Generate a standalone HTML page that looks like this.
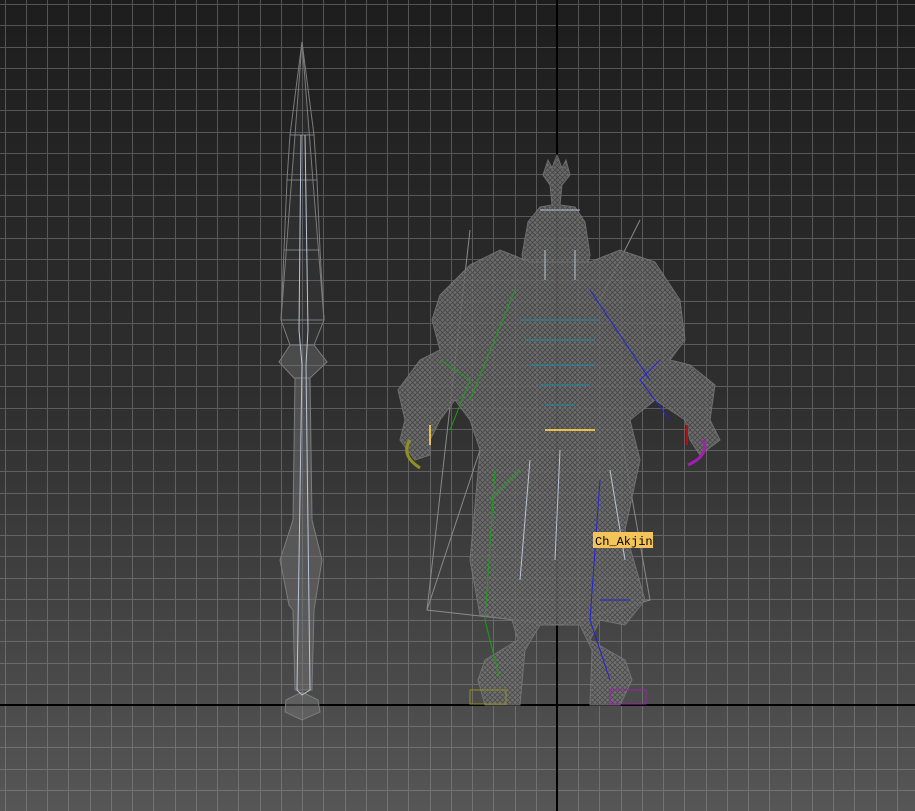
<!DOCTYPE html>
<html><head><style>
html,body{margin:0;padding:0;width:915px;height:811px;overflow:hidden;background:#333}
svg{display:block}
</style></head><body>
<svg width="915" height="811" viewBox="0 0 915 811" xmlns="http://www.w3.org/2000/svg">
<defs>
<linearGradient id="bg" x1="0" y1="0" x2="0" y2="1">
<stop offset="0" stop-color="#1d1d1d"/>
<stop offset="0.5" stop-color="#2f2f2f"/>
<stop offset="1" stop-color="#565656"/>
</linearGradient>
<pattern id="mesh" patternUnits="userSpaceOnUse" width="5" height="5">
<rect width="5" height="5" fill="#767676"/>
<path d="M0 0L5 5M5 0L0 5" stroke="#4a4a4a" stroke-width="0.8"/>
</pattern>
</defs>
<rect width="915" height="811" fill="url(#bg)"/>
<path shape-rendering="crispEdges" fill="none" stroke="rgba(150,150,150,0.45)" stroke-width="1" d="
M5.5 0V811M26.5 0V811M47.5 0V811M68.5 0V811M90.5 0V811M111.5 0V811M132.5 0V811M153.5 0V811M175.5 0V811M196.5 0V811M217.5 0V811M238.5 0V811M260.5 0V811M281.5 0V811M302.5 0V811M323.5 0V811M345.5 0V811M366.5 0V811M387.5 0V811M408.5 0V811M430.5 0V811M451.5 0V811M472.5 0V811M493.5 0V811M515.5 0V811M536.5 0V811M578.5 0V811M599.5 0V811M621.5 0V811M642.5 0V811M663.5 0V811M684.5 0V811M706.5 0V811M727.5 0V811M748.5 0V811M769.5 0V811M791.5 0V811M812.5 0V811M833.5 0V811M854.5 0V811M876.5 0V811M897.5 0V811
M0 4.5H915M0 25.5H915M0 47.5H915M0 68.5H915M0 89.5H915M0 110.5H915M0 132.5H915M0 153.5H915M0 174.5H915M0 195.5H915M0 216.5H915M0 238.5H915M0 259.5H915M0 280.5H915M0 301.5H915M0 323.5H915M0 344.5H915M0 365.5H915M0 386.5H915M0 408.5H915M0 429.5H915M0 450.5H915M0 471.5H915M0 493.5H915M0 514.5H915M0 535.5H915M0 556.5H915M0 578.5H915M0 599.5H915M0 620.5H915M0 641.5H915M0 663.5H915M0 684.5H915M0 726.5H915M0 747.5H915M0 769.5H915M0 790.5H915"/>
<rect x="556" y="0" width="2" height="811" fill="#000"/>
<rect x="0" y="704" width="915" height="2" fill="#000"/>

<!-- spear -->
<g fill="none" stroke="#7c7c7c" stroke-width="1">
<path d="M302 42 L281 320 L290 345 L314 345 L324 320 Z" fill="rgba(120,120,120,0.1)"/>
<path d="M302 42 L290 135 L314 135 Z M290 135 L287 180 L317 180 L314 135 M287 180 L284 250 L320 250 L317 180 M284 250 L281 320 L324 320 L320 250"/>
<path d="M290 345 L279 362 L294 378 L310 378 L327 362 L314 345 Z" fill="rgba(120,120,120,0.4)"/>
<path d="M295 378 L293 520 L280 560 L289 605 L293 610 L295 690 L312 690 L314 610 L322 560 L312 520 L310 378 Z" fill="rgba(120,120,120,0.45)"/>
<path d="M286 700 L302 692 L318 700 L320 712 L302 720 L285 712 Z" fill="rgba(120,120,120,0.45)"/>
</g>
<g fill="none" stroke="#b8c4d8" stroke-width="1">
<path d="M301 135 L299 330 L302 365 L297 690 L302 695 L310 690 L306 365 L308 330 L305 135"/>
</g>

<!-- cape lines -->
<g fill="none" stroke="#8a8a8a" stroke-width="1">
<path d="M470 230 L427 610 L560 625 M640 220 L600 300 M480 450 L427 610 M620 430 L650 600 L560 625"/>
</g>
<!-- character silhouette -->
<g fill="url(#mesh)" stroke="#7a7a7a" stroke-width="1" opacity="0.85">
<path d="M548 160 L552 168 L557 155 L562 168 L566 160 L570 175 L562 185 L560 205 L575 207 L585 222 L590 255 L582 290 L530 290 L522 255 L528 222 L540 207 L552 205 L550 185 L543 175 Z"/>
<path d="M470 265 L500 250 L530 262 L590 262 L620 250 L655 262 L680 300 L685 340 L670 360 L690 365 L715 385 L710 420 L720 440 L700 455 L690 440 L685 420 L655 400 L630 420 L640 460 L625 530 L645 600 L625 625 L600 620 L590 640 L625 660 L632 680 L620 705 L590 705 L592 650 L580 625 L540 625 L525 650 L520 705 L485 705 L478 680 L485 660 L518 640 L512 620 L480 615 L470 560 L480 450 L470 420 L455 400 L440 420 L430 440 L430 455 L415 460 L400 440 L405 420 L398 390 L420 360 L440 350 L432 320 L440 295 Z"/>
</g>
<g fill="none" stroke-width="1">
<path d="M515 290 L470 400 M495 470 L485 620 L500 680 M490 500 L520 470" stroke="#19a019"/>
<path d="M440 360 L470 380 L450 430" stroke="#19a019"/>
<path d="M590 290 L650 380 M600 480 L590 620 L610 680 M600 600 L630 600" stroke="#2323d8"/>
<path d="M660 360 L640 380 L670 420" stroke="#2323d8"/>
<path d="M520 320 H600 M525 340 H595 M530 365 H595 M540 385 H590 M545 405 H575" stroke="#1b8fa8"/>
<path d="M430 425 V445 M545 430 H595" stroke="#e8c050" stroke-width="2"/>
<path d="M410 440 Q400 455 420 468" stroke="#909020" stroke-width="3"/>
<path d="M687 425 V445" stroke="#b01010" stroke-width="2"/>
<path d="M703 440 Q710 455 688 465" stroke="#a020b0" stroke-width="3"/>
<rect x="470" y="690" width="36" height="14" stroke="#909020"/>
<rect x="610" y="690" width="36" height="14" stroke="#a020b0"/>
<path d="M540 210 H580 M545 250 V280 M575 250 V280" stroke="#b8c4d8"/>
<path d="M530 460 L520 580 M560 450 L555 560 M610 470 L625 560" stroke="#b8c4d8"/>
</g>

<rect x="593" y="532" width="60" height="16" fill="#f2c45a"/>
<text x="595" y="545" font-family="Liberation Mono, monospace" font-size="12" fill="#000">Ch_Akjin</text>
</svg>
</body></html>
